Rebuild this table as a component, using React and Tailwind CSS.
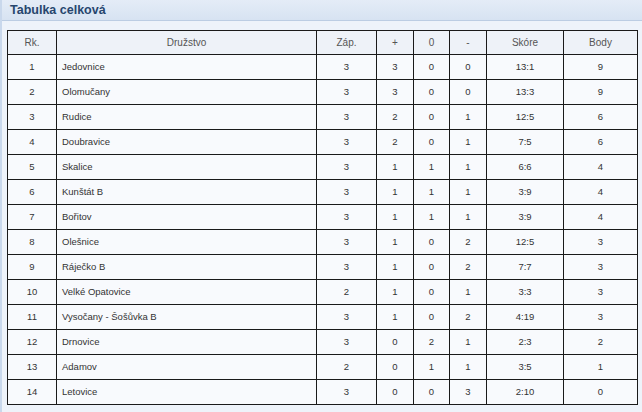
const rows = [
  [1, 'Jedovnice', 3, 3, 0, 0, '13:1', 9],
  [2, 'Olomučany', 3, 3, 0, 0, '13:3', 9],
  [3, 'Rudice', 3, 2, 0, 1, '12:5', 6],
  [4, 'Doubravice', 3, 2, 0, 1, '7:5', 6],
  [5, 'Skalice', 3, 1, 1, 1, '6:6', 4],
  [6, 'Kunštát B', 3, 1, 1, 1, '3:9', 4],
  [7, 'Bořitov', 3, 1, 1, 1, '3:9', 4],
  [8, 'Olešnice', 3, 1, 0, 2, '12:5', 3],
  [9, 'Ráječko B', 3, 1, 0, 2, '7:7', 3],
  [10, 'Velké Opatovice', 2, 1, 0, 1, '3:3', 3],
  [11, 'Vysočany - Šošůvka B', 3, 1, 0, 2, '4:19', 3],
  [12, 'Drnovice', 3, 0, 2, 1, '2:3', 2],
  [13, 'Adamov', 2, 0, 1, 1, '3:5', 1],
  [14, 'Letovice', 3, 0, 0, 3, '2:10', 0],
]

const cols = ['w-[49px]', 'w-[260px]', 'w-[60px]', 'w-[37px]', 'w-[36px]', 'w-[37px]', 'w-[77px]', 'w-[74px]']
const heads = ['Rk.', 'Družstvo', 'Záp.', '+', '0', '-', 'Skóre', 'Body']

const App = () => {
  return (
    <div className="w-[642px] h-[412px] bg-[#eef3fa] border-l-2 border-[#c9d8ec] font-['Liberation_Sans',Arial,sans-serif] overflow-hidden">
      <div className="h-[21px] bg-gradient-to-b from-[#e4ecf7] to-[#d7e3f2] border-b border-[#bccde3] flex items-center pl-[8px]">
        <span className="text-[12.5px] font-bold text-[#27466e]">Tabulka celková</span>
      </div>
      <div className="pl-[5px] pt-[9px]">
        <table className="border-collapse table-fixed w-[631px] border border-[#1a1a1a]">
          <colgroup>
            {cols.map((c, i) => <col key={i} className={c} />)}
          </colgroup>
          <thead>
            <tr className="h-[24px] bg-[#eef2f8]">
              {heads.map((h, i) => (
                <th key={i} className="border border-[#1a1a1a] text-[10px] font-normal text-[#555] text-center">{h}</th>
              ))}
            </tr>
          </thead>
          <tbody>
            {rows.map((r) => (
              <tr key={r[0]} className="h-[25px] bg-[#f8fafd]">
                {r.map((v, i) => (
                  <td key={i} className={`border border-[#1a1a1a] text-[9.5px] text-[#333] ${i === 1 ? 'text-left pl-[5px]' : 'text-center'}`}>{v}</td>
                ))}
              </tr>
            ))}
          </tbody>
        </table>
      </div>
    </div>
  )
}

export default App
